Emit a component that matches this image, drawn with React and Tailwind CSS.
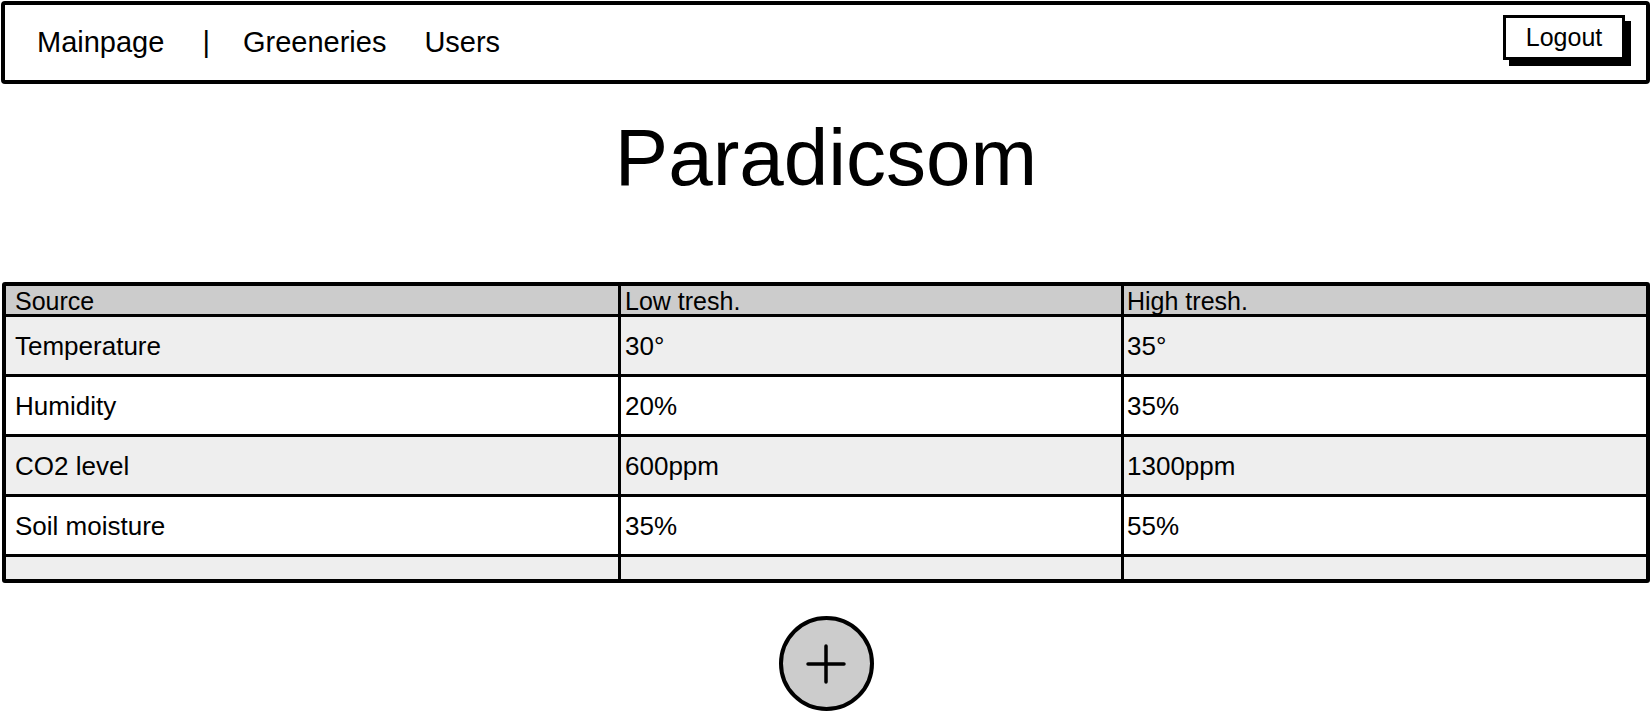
import React from 'react';

const rows = [
  { source: 'Temperature', low: '30°', high: '35°', bg: 'bg-[#eeeeee]' },
  { source: 'Humidity', low: '20%', high: '35%', bg: 'bg-white' },
  { source: 'CO2 level', low: '600ppm', high: '1300ppm', bg: 'bg-[#eeeeee]' },
  { source: 'Soil moisture', low: '35%', high: '55%', bg: 'bg-white' },
];

function NavBar() {
  return (
    <nav className="ml-[1px] mt-[1px] w-[1649px] h-[83px] border-4 border-black rounded-[4px] flex items-center pl-[32px] text-[29px] text-black">
      <a className="leading-none">Mainpage</a>
      <span className="ml-[38px] leading-none">|</span>
      <a className="ml-[33px] leading-none">Greeneries</a>
      <a className="ml-[38px] leading-none">Users</a>
      {/* Logout button with hard shadow */}
      <button className="ml-auto mr-[21px] self-start mt-[10px] w-[122px] h-[45px] border-[3px] border-black bg-white shadow-[6px_6px_0_#000] text-[25px] leading-none flex items-center justify-center">
        Logout
      </button>
    </nav>
  );
}

function ThresholdTable() {
  return (
    <div className="ml-[2px] w-[1648px] border-4 border-black rounded-[3px] overflow-hidden">
      <div className="grid grid-cols-[615px_503px_1fr] h-[31px] bg-[#cccccc] border-b-[3px] border-black text-[25px] leading-none">
        <div className="pl-[9px] pt-[2px] flex items-center border-r-[3px] border-black">Source</div>
        <div className="pl-[4px] pt-[2px] flex items-center border-r-[3px] border-black">Low tresh.</div>
        <div className="pl-[3px] pt-[2px] flex items-center">High tresh.</div>
      </div>
      {rows.map((r) => (
        <div
          key={r.source}
          className={`grid grid-cols-[615px_503px_1fr] h-[60px] border-b-[3px] border-black text-[26px] leading-none ${r.bg}`}
        >
          <div className="pl-[9px] flex items-center border-r-[3px] border-black">{r.source}</div>
          <div className="pl-[4px] flex items-center border-r-[3px] border-black">{r.low}</div>
          <div className="pl-[3px] flex items-center">{r.high}</div>
        </div>
      ))}
      <div className="grid grid-cols-[615px_503px_1fr] h-[22px] bg-[#eeeeee]">
        <div className="border-r-[3px] border-black" />
        <div className="border-r-[3px] border-black" />
        <div />
      </div>
    </div>
  );
}

export default function App() {
  return (
    <div className="w-[1652px] h-[712px] bg-white overflow-hidden text-black font-['Liberation_Sans',Arial,sans-serif]">
      <NavBar />
      <h1 className="mt-[34px] text-center text-[80px] leading-none">Paradicsom</h1>
      <div className="mt-[84px]">
        <ThresholdTable />
      </div>
      <div className="mt-[33px] flex justify-center">
        <button className="w-[95px] h-[95px] rounded-full border-4 border-black bg-[#cccccc] flex items-center justify-center">
          <svg width="40" height="40" viewBox="0 0 40 40" fill="none" stroke="black" strokeWidth="3.5" strokeLinecap="round">
            <line x1="20" y1="2" x2="20" y2="38" />
            <line x1="2" y1="20" x2="38" y2="20" />
          </svg>
        </button>
      </div>
    </div>
  );
}
